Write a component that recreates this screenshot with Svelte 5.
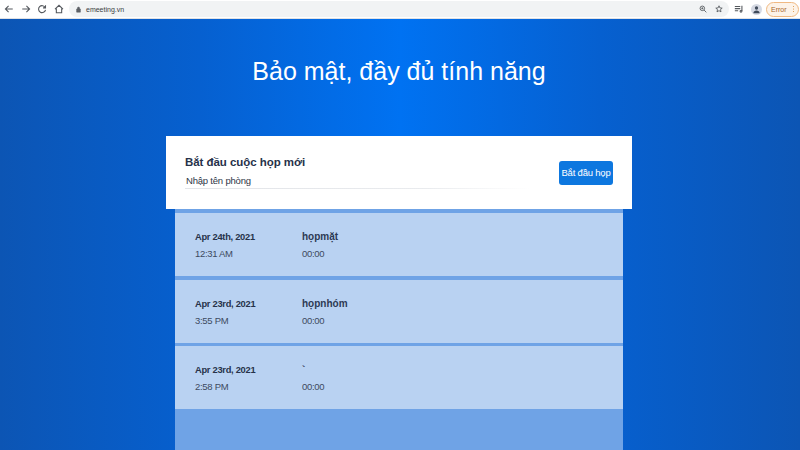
<script lang="ts">
  const meetings = [
    { date: "Apr 24th, 2021", time: "12:31 AM", name: "họpmặt", length: "00:00" },
    { date: "Apr 23rd, 2021", time: "3:55 PM", name: "họpnhóm", length: "00:00" },
    { date: "Apr 23rd, 2021", time: "2:58 PM", name: "`", length: "00:00" }
  ];
</script>

<div class="page">
  <header class="toolbar">
    <div class="nav">
      <svg viewBox="0 0 12 12" aria-hidden="true"><path d="M10.5 6H2M5.5 2.2 1.7 6l3.8 3.8" /></svg>
      <svg viewBox="0 0 12 12" aria-hidden="true"><path d="M1.5 6H10M6.5 2.2 10.3 6 6.5 9.8" /></svg>
      <svg viewBox="0 0 12 12" aria-hidden="true"><path d="M9.8 4.2A4.2 4.2 0 1 0 10.2 7M10.2 1.6v3H7.2" /></svg>
      <svg viewBox="0 0 12 12" aria-hidden="true"><path d="M1.2 6.2 6 1.6l4.8 4.6M2.8 5.4v5.1h6.4V5.4" /></svg>
    </div>
    <div class="omnibox">
      <svg class="lock" viewBox="0 0 8 10" aria-hidden="true"><path d="M1 4.2h6v5H1zM2.3 4.2V2.8a1.7 1.7 0 0 1 3.4 0v1.4" /></svg>
      <span class="url">emeeting.vn</span>
      <span class="omni-icons">
        <svg viewBox="0 0 12 12" aria-hidden="true"><circle cx="5" cy="5" r="3.4" /><path d="M7.6 7.6 11 11M3.5 5h3M5 3.5v3" /></svg>
        <svg viewBox="0 0 12 12" aria-hidden="true"><path d="M6 1.2 7.4 4.4l3.4.3-2.6 2.2.8 3.4L6 8.5l-3 1.8.8-3.4-2.6-2.2 3.4-.3z" /></svg>
      </span>
    </div>
    <div class="actions">
      <svg class="queue" viewBox="0 0 12 12" aria-hidden="true"><path d="M1 3h6.5M1 5.5h6.5M1 8h4M9.5 2v6.5" /><circle cx="8.4" cy="8.8" r="1.1" /></svg>
      <span class="avatar">
        <svg viewBox="0 0 12 12" aria-hidden="true"><circle cx="6" cy="4" r="2.2" /><path d="M1.8 11c0-2.6 2-3.8 4.2-3.8s4.2 1.2 4.2 3.8z" /></svg>
      </span>
      <span class="error">Error<i class="dots"></i></span>
    </div>
  </header>

  <main class="hero">
    <h1>Bảo mật, đầy đủ tính năng</h1>

    <section class="panel">
      <div class="start-card">
        <div class="start-form">
          <h2>Bắt đầu cuộc họp mới</h2>
          <div class="room-input">Nhập tên phòng</div>
        </div>
        <button type="button" class="start-button">Bắt đầu họp</button>
      </div>

      <div class="history">
        {#each meetings as meeting}
          <div class="row">
            <div class="when">
              <strong>{meeting.date}</strong>
              <span>{meeting.time}</span>
            </div>
            <div class="what">
              <strong>{meeting.name}</strong>
              <span>{meeting.length}</span>
            </div>
          </div>
        {/each}
      </div>
    </section>
  </main>
</div>

<style>
  :global(body) {
    margin: 0;
  }

  .page {
    width: 800px;
    height: 450px;
    overflow: hidden;
    display: flex;
    flex-direction: column;
    font-family: "Liberation Sans", Arial, sans-serif;
  }

  .toolbar {
    flex: 0 0 19px;
    display: flex;
    align-items: center;
    background: #fff;
    border-bottom: 1px solid #dfe1e5;
    box-sizing: border-box;
  }

  .toolbar svg {
    fill: none;
    stroke: #55595e;
    stroke-width: 1.3;
  }

  .nav {
    display: flex;
    align-items: center;
    gap: 6.5px;
    padding-left: 4px;
    width: 69px;
    flex: none;
    box-sizing: border-box;
  }

  .nav svg {
    width: 10px;
    height: 10px;
    flex: none;
  }

  .omnibox {
    flex: 1;
    height: 16px;
    display: flex;
    align-items: center;
    padding-left: 7px;
    border-radius: 8px;
    background: #f1f3f4;
  }

  .lock {
    width: 5px;
    height: 7px;
    fill: #5f6368 !important;
    stroke-width: 0.8 !important;
  }

  .url {
    margin-left: 5px;
    font-size: 7px;
    color: #3c4043;
  }

  .omni-icons {
    margin-left: auto;
    display: flex;
    gap: 8px;
    padding-right: 6px;
  }

  .omni-icons svg {
    width: 8px;
    height: 8px;
  }

  .actions {
    display: flex;
    align-items: center;
    width: 71px;
    flex: none;
    padding-left: 5px;
    box-sizing: border-box;
  }

  .queue {
    width: 10px;
    height: 10px;
  }

  .avatar {
    width: 11px;
    height: 11px;
    margin-left: 7px;
    border-radius: 50%;
    background: #d5d9e3;
    display: flex;
    align-items: center;
    justify-content: center;
  }

  .avatar svg {
    width: 9px;
    height: 9px;
    fill: #3f4a5a;
    stroke: none;
  }

  .error {
    position: relative;
    width: 33px;
    height: 15px;
    margin-left: 4px;
    box-sizing: border-box;
    border: 1px solid #f0b982;
    border-radius: 8px;
    background: #fdf3e8;
    font-size: 7px;
    line-height: 13px;
    padding-left: 4px;
    color: #a8652a;
  }

  .dots {
    position: absolute;
    right: 4px;
    top: 3px;
    width: 1.5px;
    height: 1.5px;
    border-radius: 50%;
    background: #d98a2b;
    box-shadow: 0 2.5px 0 #d98a2b, 0 5px 0 #d98a2b;
  }

  .hero {
    flex: 1;
    min-height: 0;
    display: flex;
    flex-direction: column;
    align-items: center;
    padding-right: 2px;
    background: linear-gradient(90deg, #0c55b4 0%, #0660d0 25%, #0072f2 50%, #0660d0 75%, #0c55b4 100%);
  }

  h1 {
    margin: 34px 0 0;
    font-size: 25px;
    line-height: 36px;
    font-weight: 400;
    color: #fff;
  }

  .panel {
    margin-top: 47px;
    width: 466px;
    display: flex;
    flex-direction: column;
    align-items: center;
  }

  .start-card {
    width: 100%;
    height: 73px;
    box-sizing: border-box;
    padding: 0 19px;
    display: flex;
    align-items: center;
    justify-content: space-between;
    background: #fff;
  }

  .start-form {
    width: 344px;
    padding-bottom: 2px;
  }

  h2 {
    margin: 0;
    font-size: 11.5px;
    line-height: 16px;
    font-weight: 700;
    letter-spacing: -0.05px;
    color: #27324a;
  }

  .room-input {
    margin-top: 4px;
    padding-left: 1px;
    padding-bottom: 1px;
    font-size: 9.5px;
    letter-spacing: -0.2px;
    line-height: 13px;
    color: #2f3747;
    border-bottom: 1px solid;
    border-image: linear-gradient(90deg, #e2e4e8 0%, #e9ebee 70%, #fff 100%) 1;
  }

  .start-button {
    width: 54px;
    height: 24px;
    padding: 0;
    border: 0;
    border-radius: 3px;
    background: #0d77df;
    color: #fff;
    font: inherit;
    font-size: 9.5px;
    letter-spacing: -0.2px;
  }

  .history {
    width: 448px;
    height: 241px;
    box-sizing: border-box;
    padding-top: 4px;
    display: flex;
    flex-direction: column;
    gap: 3.5px;
    background: #6fa3e6;
  }

  .row {
    height: 63px;
    flex: none;
    box-sizing: border-box;
    padding: 16px 20px 0;
    display: grid;
    grid-template-columns: 107px 1fr;
    background: #b9d2f2;
    color: #27324a;
  }

  .when,
  .what {
    display: flex;
    flex-direction: column;
  }

  .when strong {
    font-size: 9.3px;
    letter-spacing: -0.27px;
    line-height: 16px;
    font-weight: 700;
  }

  .what strong {
    font-size: 10px;
    line-height: 16px;
    font-weight: 700;
    color: #2d3a54;
  }

  .row span {
    margin-top: 1px;
    font-size: 9.5px;
    letter-spacing: -0.3px;
    line-height: 16px;
    color: #3d4a60;
  }
</style>
